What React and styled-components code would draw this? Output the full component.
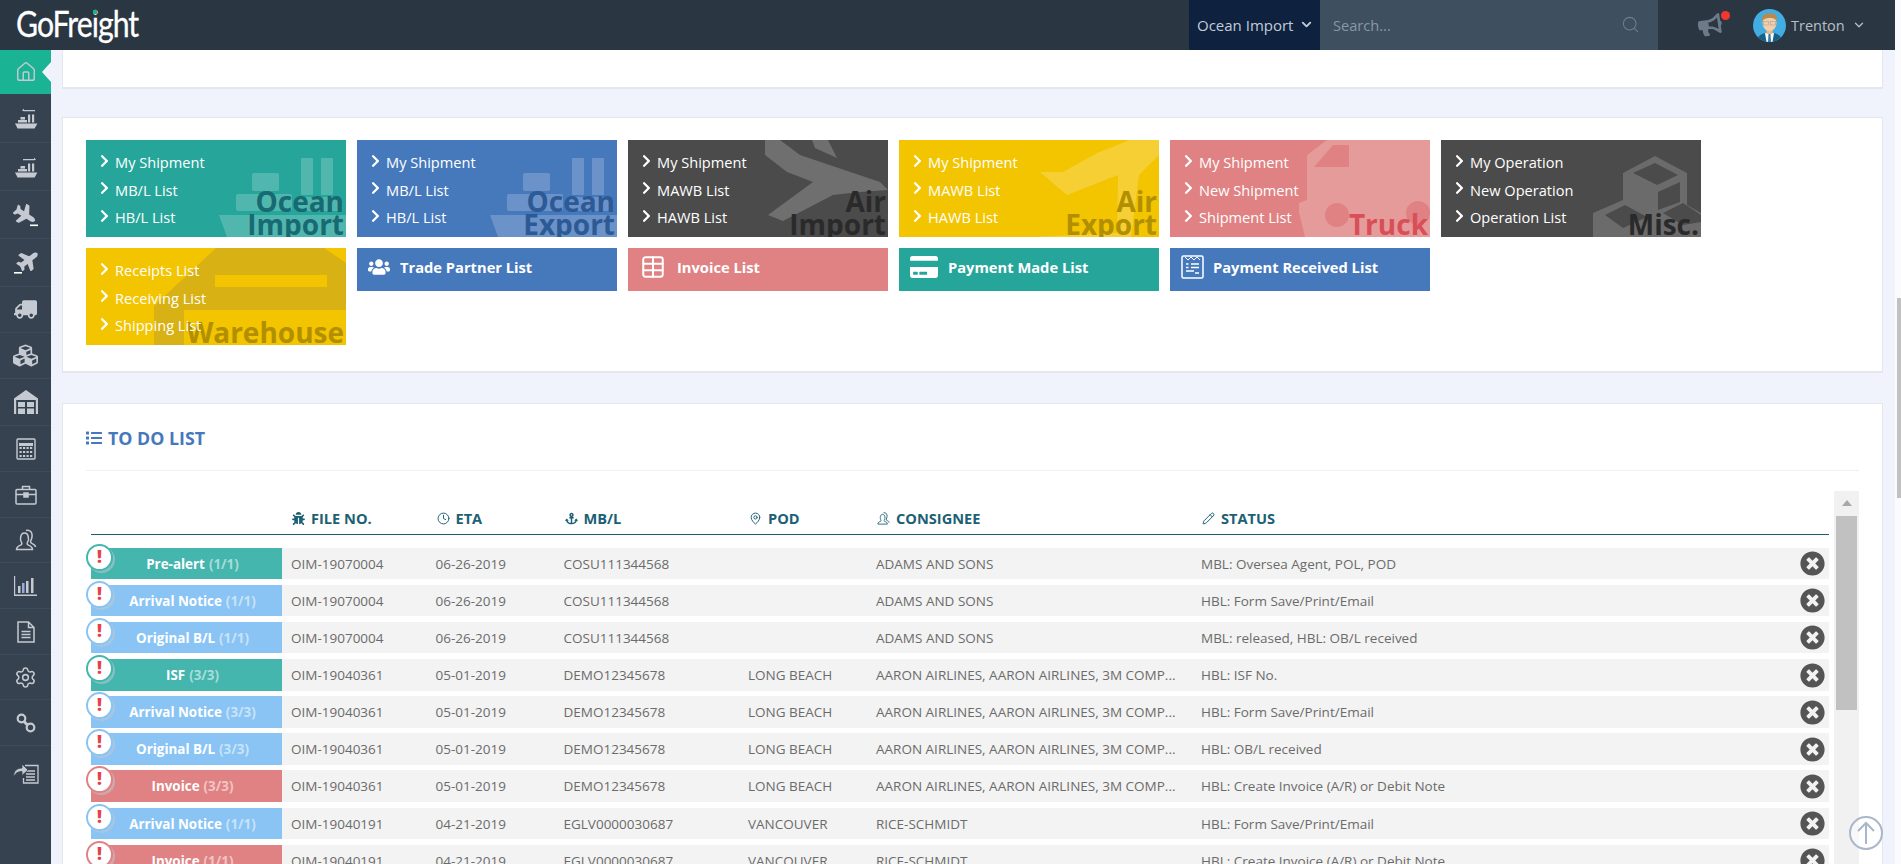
import React from "react";
import styled, { createGlobalStyle } from "styled-components";
import { FaChevronRight, FaUsers, FaCreditCard, FaList, FaTimesCircle, FaBug, FaBullhorn, FaCubes, FaTruck, FaAnchor } from "react-icons/fa";
import { House, Search, ChevronDown, Clock, MapPin, Pencil, Settings, Table } from "lucide-react";

const Global = createGlobalStyle`
  html, body { margin: 0; padding: 0; height: 100%; overflow: hidden; background: #f0f3fb; }
  body { font-family: "Open Sans", "Liberation Sans", sans-serif; font-size: 13px; color: #666; }
  #root { height: 100%; }
  * { box-sizing: border-box; }
`;

const Page = styled.div`
  display: flex;
  width: 100%;
  height: 100vh;
  overflow: hidden;
`;
const Shell = styled.div`
  flex: 1;
  min-width: 0;
  display: flex;
  flex-direction: column;
`;
const PageScroll = styled.div`
  width: 6px;
  flex: none;
  background: #fbfbfd;
  padding-top: 298px;
  padding-left: 2px;
`;
const PageThumb = styled.div`
  height: 200px;
  background: #c1c1c1;
`;
const Header = styled.header`
  height: 50px;
  flex: none;
  background: #2b3643;
  display: flex;
  align-items: stretch;
`;
const Logo = styled.div`
  position: relative;
  width: 1189px;
  padding-left: 16px;
`;
const LogoWord = styled.div`
  font-family: "Lato", sans-serif;
  font-size: 36px;
  line-height: 47px;
  color: #fff;
  letter-spacing: -1.2px;
  transform: scaleX(0.84);
  transform-origin: left center;
  -webkit-text-stroke: 0.3px #fff;
`;
const LogoDot = styled.span`
  position: absolute;
  left: 93px;
  top: 10px;
  width: 4px;
  height: 4px;
  background: #1ab394;
`;
const ModeSelect = styled.div`
  width: 131px;
  background: #0e2240;
  color: #c3ccd6;
  font-size: 15px;
  display: flex;
  align-items: center;
  padding-left: 8px;
  padding-bottom: 1px;
  gap: 6px;
`;
const SearchBox = styled.div`
  width: 338px;
  background: #3e4f60;
  color: #8897a6;
  font-size: 14.6px;
  display: flex;
  align-items: center;
  justify-content: space-between;
  padding: 0 18px 1px 13px;
`;
const NoticeWrap = styled.div`
  position: relative;
  margin-left: 40px;
  width: 24px;
  display: flex;
  align-items: center;
  color: #6c7a8a;
`;
const NoticeDot = styled.span`
  position: absolute;
  top: 11px;
  right: -8px;
  width: 9px;
  height: 9px;
  border-radius: 50%;
  background: #f3372f;
`;
const UserBox = styled.div`
  display: flex;
  align-items: center;
  margin-left: 31px;
  color: #b6c0cb;
  font-size: 14.5px;
  gap: 5px;
`;
const Body = styled.div`
  flex: 1;
  min-height: 0;
  display: flex;
`;
const Sidebar = styled.nav`
  width: 51px;
  flex: none;
  background: #36424f;
  display: flex;
  flex-direction: column;
`;
const SideItem = styled.div`
  position: relative;
  height: ${(p) => p.$h}px;
  flex: none;
  display: flex;
  align-items: center;
  justify-content: center;
  color: #c5cad2;
  background: ${(p) => (p.$active ? "#1ab394" : "transparent")};
  border-bottom: ${(p) => (p.$active || p.$last ? "0" : "1px solid #3f4b59")};
`;
const Notch = styled.span`
  position: absolute;
  right: 0;
  top: 12px;
  width: 0;
  height: 0;
  border-top: 10.5px solid transparent;
  border-bottom: 10.5px solid transparent;
  border-right: 9px solid #f0f3fb;
`;
const Main = styled.main`
  flex: 1;
  min-width: 0;
  overflow: hidden;
  padding: 0 12px 0 11px;
`;
const Card = styled.section`
  background: #fff;
  border: 1px solid #e3e7ee;
  border-bottom-width: 2px;
`;
const TopCard = styled(Card)`
  height: 39px;
  border-top: 0;
`;
const TilesCard = styled(Card)`
  margin-top: 28px;
  height: 256px;
  padding: 22px 0 0 23px;
`;
const TileGrid = styled.div`
  display: grid;
  grid-template-columns: repeat(6, 260px);
  column-gap: 11px;
  row-gap: 11px;
  align-items: start;
`;
const Tile = styled.div`
  position: relative;
  height: 97px;
  overflow: hidden;
  background: ${(p) => p.$bg};
  color: #fff;
  padding-top: 8.5px;
  padding-left: 14px;
`;
const TileArt = styled.svg`
  position: absolute;
  left: 0;
  top: 0;
  width: 260px;
  height: 97px;
`;
const TileLinks = styled.ul`
  position: relative;
  margin: 0;
  padding: 0;
  list-style: none;
`;
const TileLink = styled.li`
  display: flex;
  align-items: center;
  height: 27.5px;
  font-size: 14.6px;
  gap: 6px;
  svg { width: 9px; height: 14px; margin-top: -3px; flex: none; }
`;
const TileTitle = styled.div`
  position: absolute;
  right: 2px;
  bottom: 1px;
  text-align: right;
  font-size: 28px;
  font-weight: 700;
  line-height: 23px;
  color: ${(p) => p.$c};
`;
const ListTile = styled.div`
  height: 43px;
  background: ${(p) => p.$bg};
  color: #fff;
  display: flex;
  align-items: center;
  padding-bottom: 5px;
  padding-left: ${(p) => p.$pad}px;
  gap: ${(p) => p.$gap}px;
  font-size: 14.7px;
  font-weight: 700;
`;
const TodoCard = styled(Card)`
  margin-top: 30px;
  padding: 0 23px;
  height: 600px;
`;
const TodoTitle = styled.h2`
  margin: 0;
  height: 67px;
  border-bottom: 1px solid #eef0f3;
  display: flex;
  align-items: center;
  gap: 6px;
  font-size: 17.8px;
  font-weight: 700;
  color: #4678bc;
  padding-top: 2px;
`;
const TodoBody = styled.div`
  display: flex;
  margin-top: 20px;
  gap: 5px;
  padding-left: 5px;
`;
const TableArea = styled.div`
  flex: 1;
  min-width: 0;
`;
const HeadRow = styled.div`
  display: grid;
  grid-template-columns: 191px 144.5px 128px 184.5px 128px 325px 1fr;
  height: 44px;
  border-bottom: 1.5px solid #1d5b70;
  margin-bottom: 13px;
  align-items: end;
  padding-bottom: 6px;
`;
const HeadCell = styled.div`
  display: flex;
  align-items: center;
  gap: 6px;
  padding-left: 10px;
  font-size: 14.6px;
  font-weight: 700;
  color: #1c6075;
  svg { width: 13px; height: 13px; flex: none; }
`;
const Row = styled.div`
  position: relative;
  display: grid;
  grid-template-columns: 191px 144.5px 128px 184.5px 128px 325px 1fr 29.5px;
  height: ${(p) => p.$h}px;
  margin-bottom: ${(p) => p.$mb}px;
  background: #f3f3f3;
  align-items: center;
`;
const Label = styled.div`
  align-self: stretch;
  background: ${(p) => p.$bg};
  color: #fff;
  font-weight: 700;
  font-size: 13.4px;
  display: flex;
  align-items: center;
  justify-content: center;
  padding-left: 12px;
  white-space: nowrap;
`;
const Count = styled.span`
  color: rgba(255, 255, 255, 0.55);
  margin-left: 4px;
`;
const Alert = styled.span`
  position: absolute;
  left: -5px;
  top: -4px;
  width: 27px;
  height: 27px;
  border-radius: 50%;
  background: #fff;
  border: 2px solid ${(p) => p.$c};
  box-shadow: 2px 2px 0 rgba(190, 200, 210, 0.55);
  color: #e7404a;
  font-weight: 800;
  font-size: 17px;
  line-height: 21px;
  text-align: center;
`;
const Cell = styled.div`
  padding-left: 9px;
  font-size: 13.5px;
  color: #6b6b6b;
  white-space: nowrap;
  overflow: hidden;
`;
const Dismiss = styled.div`
  color: #555;
  display: flex;
  align-items: center;
  svg { width: 25px; height: 25px; }
`;
const InnerScroll = styled.div`
  width: 25px;
  flex: none;
  background: #f1f1f1;
  height: 400px;
  padding: 9px 2px 0;
`;
const ScrollArrow = styled.div`
  width: 0;
  height: 0;
  margin: 0 auto 10px;
  border-left: 5.5px solid transparent;
  border-right: 5.5px solid transparent;
  border-bottom: 6px solid #a8a8a8;
`;
const ScrollThumb = styled.div`
  height: 194px;
  background: #c1c1c1;
`;
const ToTop = styled.div`
  position: fixed;
  left: 1849px;
  top: 816px;
  width: 34px;
  height: 34px;
  border-radius: 50%;
  border: 2px solid #a9b7c9;
  background: rgba(255, 255, 255, 0.5);
  color: #a9b7c9;
  display: flex;
  align-items: center;
  justify-content: center;
`;

const Ship = ({ dir }) => (
  <svg width="24" height="24" viewBox="0 0 24 24" fill="currentColor">
    {dir === "in" ? (
      <path d="M10 4h11v1.300H10zM10 2.400 8 4.700 10 5.300z" />
    ) : (
      <path d="M9 4h11v1.300H9zM20 2.400l2 2.300-2 .6z" />
    )}
    <rect x="14" y="8.500" width="2.200" height="8" />
    <rect x="18" y="8.500" width="2.200" height="8" />
    <rect x="6.500" y="11" width="4.500" height="2.600" />
    <rect x="4" y="14" width="9" height="2.500" />
    <path d="M1 17.500h22.400l-2.800 5H3.600z" />
  </svg>
);
const PLANE = "M480 192H365.71L260.61 8.06A16.014 16.014 0 0 0 246.71 0h-65.5c-10.63 0-18.3 10.17-15.38 20.39L214.86 192H112l-43.2-57.6c-3.02-4.03-7.77-6.4-12.8-6.4H16.01C5.6 128-2.04 137.78.49 147.88L32 256 .49 364.12C-2.04 374.22 5.6 384 16.01 384H56c5.04 0 9.78-2.37 12.8-6.4L112 320h102.86l-49.03 171.6c-2.92 10.22 4.75 20.4 15.38 20.4h65.5c5.74 0 11.04-3.08 13.89-8.06L365.71 320H480c35.35 0 96-28.65 96-64s-60.65-64-96-64z";
const PlaneIn = () => (
  <svg width="26" height="26" viewBox="0 0 26 26" fill="currentColor">
    <g transform="translate(1 2) rotate(32 10 10) scale(0.04)"><path d={PLANE} /></g>
    <rect x="17" y="22.500" width="8" height="1.600" fill="#fff" />
  </svg>
);
const PlaneOut = () => (
  <svg width="26" height="26" viewBox="0 0 26 26" fill="currentColor">
    <g transform="translate(4 1) rotate(-38 10 10) scale(0.04)"><path d={PLANE} /></g>
    <rect x="1" y="22" width="8" height="1.600" fill="#fff" />
  </svg>
);
const Warehouse = () => (
  <svg width="26" height="24" viewBox="0 0 26 24" fill="currentColor">
    <path d="M13 0 25 8.500V24h-2.200V10H3.200v14H1V8.500z" />
    <rect x="5" y="12" width="7" height="5" /><rect x="14" y="12" width="7" height="5" />
    <rect x="5" y="18.500" width="7" height="5.500" /><rect x="14" y="18.500" width="7" height="5.500" />
  </svg>
);
const Calc = () => (
  <svg width="20" height="22" viewBox="0 0 20 22" fill="none" stroke="currentColor">
    <rect x="1" y="1" width="18" height="20" rx="1" strokeWidth="1.400" />
    <path d="M3 6.500h14" strokeWidth="3" />
    <path d="M3.500 10h13M3.500 14h13M3.500 18h13" strokeWidth="2" strokeDasharray="2.200 1.300" />
  </svg>
);
const Briefcase = () => (
  <svg width="22" height="20" viewBox="0 0 22 20" fill="none" stroke="currentColor" strokeWidth="1.500">
    <rect x="1" y="4.500" width="20" height="14.500" rx="1" />
    <path d="M7.500 4.500V1.500h7v3M1 9.500h20" />
    <rect x="9" y="8" width="4" height="4" fill="currentColor" />
  </svg>
);
const People = ({ size = 22 }) => (
  <svg width={size} height={size} viewBox="0 0 22 22" fill="none" stroke="currentColor" strokeWidth="1.500">
    <path d="M1.500 20.500c0-3 2-3.600 4.500-4.600 1-.5 1-2 .3-3C5 11 5 4 9.500 4c4.500 0 4.500 7 3.200 8.900-.7 1-.7 2.500.3 3 2.500 1 4.500 1.600 4.500 4.600z" />
    <path d="M11 1.400c4-1 6.600 2 6 6.500-.2 1.800-.8 3-1.300 4-.4 1 0 2 1 2.400 2 .8 3.800 1.500 3.800 3.700" />
  </svg>
);
const Chart = () => (
  <svg width="23" height="20" viewBox="0 0 23 20" fill="currentColor">
    <path d="M0 0h1.200v18.600H23V20H0z" />
    <rect x="4" y="10" width="2.500" height="7" /><rect x="8" y="7" width="2.500" height="10" fill="#9aa7e0" />
    <rect x="12" y="5" width="2.500" height="12" /><rect x="17" y="2" width="2.500" height="15" />
  </svg>
);
const Doc = () => (
  <svg width="18" height="22" viewBox="0 0 18 22" fill="none" stroke="currentColor" strokeWidth="1.500">
    <path d="M1 1h10.500L17 6.500V21H1zM11.500 1v5.500H17" />
    <path d="M4.500 10.500h9M4.500 13.500h9M4.500 16.500h9" />
  </svg>
);
const Chain = () => (
  <svg width="20" height="20" viewBox="0 0 20 20" fill="none" stroke="currentColor" strokeWidth="2.200">
    <circle cx="5.500" cy="5.500" r="3.800" />
    <circle cx="14.500" cy="14.500" r="3.800" />
    <path d="M7.500 8 12 12.500" strokeWidth="3" />
  </svg>
);
const Share = () => (
  <svg width="26" height="24" viewBox="0 0 26 24" fill="none" stroke="currentColor" strokeWidth="1.300">
    <path d="M12 5.500h7l6 0V23H10.500v-5" />
    <path d="M13 11h9M13 14h9M13 17h9M13 20h9" strokeWidth="1.500" />
    <path d="M0.500 17c0-6 3.500-9 8.500-9V4l6 6-6 5.500V11.500c-4 0-6.500 1.500-8.500 5.500z" fill="currentColor" stroke="#36424f" strokeWidth="0.800" />
  </svg>
);
const Receipt = () => (
  <svg width="23" height="24" viewBox="0 0 23 24" fill="none" stroke="#fff" strokeWidth="1.500">
    <rect x="1" y="1" width="21" height="22" rx="1.500" />
    <path d="m4 2 3 3 3-3 3 3 3-3 3 3" strokeWidth="1" />
    <path d="M5 9h2.500M10 9h8M5 12.500h2.500M10 12.500h8M5 16h8M14 18h4" />
  </svg>
);
const Avatar = () => (
  <svg width="33" height="33" viewBox="0 0 33 33">
    <defs><clipPath id="av"><circle cx="16.500" cy="16.500" r="16.500" /></clipPath></defs>
    <g clipPath="url(#av)">
      <rect width="33" height="33" fill="#41ade2" />
      <path d="M4 33c0-6 4-8 8-9h9c4 1 8 3 8 9z" fill="#1c5f86" />
      <path d="M12 24h9l-1.500 9h-6z" fill="#fff" />
      <path d="M15.500 25h2l.5 8h-3z" fill="#2a7fb0" />
      <rect x="13.500" y="19" width="6" height="6" fill="#e6b98e" />
      <ellipse cx="16.500" cy="14" rx="7" ry="8" fill="#f2cfa8" />
      <path d="M9 13c-1-6 3-9 8-9s8 3 7 9c-1-3-3-4-7-4s-7 1-8 4z" fill="#b88a4f" />
      <rect x="10.500" y="12.500" width="5" height="3.500" fill="none" stroke="#a9a9a9" strokeWidth="0.700" />
      <rect x="17.500" y="12.500" width="5" height="3.500" fill="none" stroke="#a9a9a9" strokeWidth="0.700" />
    </g>
  </svg>
);

const white = "rgba(255,255,255,.2)";
const OceanArt = () => (
  <TileArt viewBox="0 0 260 97" fill={white}>
    <rect x="215" y="18" width="12" height="37" rx="1" />
    <rect x="235" y="18" width="12" height="37" rx="1" />
    <rect x="166" y="33" width="27" height="18" rx="2" />
    <rect x="150" y="54" width="56" height="17" rx="2" />
    <rect x="212" y="57" width="40" height="14" rx="1" />
    <path d="M133 75H260V97H141z" />
  </TileArt>
);
const AirInArt = () => (
  <TileArt viewBox="0 0 260 97" fill={white}>
    <path d="M137 0V15L159 32 185 42 140 75 155 81 205 55 232 52 260 50 252 42 172 15 152 0z" />
    <path d="M184 0 187 8 209 18 200 0z" />
  </TileArt>
);
const AirOutArt = () => (
  <TileArt viewBox="0 0 260 97" fill={white}>
    <path d="M169 0 198 13 231 0H260V15L240 35 232 97H218L219 35 168 55 141 32 164 32 198 13z" />
    <path d="M129 97 218 93V97z" />
  </TileArt>
);
const TruckArt = () => (
  <TileArt viewBox="0 0 260 97">
    <path d="M157 0H260V97H135L129 72V63L137 60V15z" fill={white} />
    <path d="M144 27 163 5H179V27z" fill="#e08283" />
    <circle cx="167" cy="75" r="12" fill="#e08283" />
    <circle cx="248" cy="73" r="12" fill="#e08283" />
  </TileArt>
);
const MiscArt = () => (
  <TileArt viewBox="0 0 260 97">
    <path d="M214 16 246 33V65L260 73V97H152V73L182 60V33z" fill="#6b6b6b" />
    <path d="M214 23 237 35 216 45 192 33z" fill="#4b4b4b" />
    <path d="M217 52 239 42V62L217 70z" fill="#4b4b4b" />
    <path d="M164 75 184 65 206 77 182 88z" fill="#4b4b4b" />
    <path d="M222 73 242 63 260 75V82L242 85z" fill="#4b4b4b" />
  </TileArt>
);
const HouseArt = () => (
  <TileArt viewBox="0 0 260 97">
    <path d="M130 0H238L260 15V62H98V97H68V58z" fill="#d8b114" />
    <rect x="129" y="27" width="112" height="12" fill="#f3c400" />
  </TileArt>
);

const tiles = [
  { bg: "#26a69a", art: <OceanArt />, links: ["My Shipment", "MB/L List", "HB/L List"], title: ["Ocean", "Import"], c: "#176a71" },
  { bg: "#4678bc", art: <OceanArt />, links: ["My Shipment", "MB/L List", "HB/L List"], title: ["Ocean", "Export"], c: "#2d5a95" },
  { bg: "#4b4b4b", art: <AirInArt />, links: ["My Shipment", "MAWB List", "HAWB List"], title: ["Air", "Import"], c: "#2a2a2a" },
  { bg: "#f3c400", art: <AirOutArt />, links: ["My Shipment", "MAWB List", "HAWB List"], title: ["Air", "Export"], c: "#b18f00" },
  { bg: "#e08283", art: <TruckArt />, links: ["My Shipment", "New Shipment", "Shipment List"], title: ["Truck"], c: "#d84f57" },
  { bg: "#4b4b4b", art: <MiscArt />, links: ["My Operation", "New Operation", "Operation List"], title: ["Misc."], c: "#2a2a2a" },
  { bg: "#f3c400", art: <HouseArt />, links: ["Receipts List", "Receiving List", "Shipping List"], title: ["Warehouse"], c: "#b18f00" },
];

const TEAL = "#44b6ae";
const BLUE = "#89c4f4";
const RED = "#e08283";
const sc = "AARON AIRLINES, AARON AIRLINES, 3M COMP...";
const rows = [
  ["Pre-alert", "(1/1)", TEAL, "OIM-19070004", "06-26-2019", "COSU111344568", "", "ADAMS AND SONS", "MBL: Oversea Agent, POL, POD", 31, 6],
  ["Arrival Notice", "(1/1)", BLUE, "OIM-19070004", "06-26-2019", "COSU111344568", "", "ADAMS AND SONS", "HBL: Form Save/Print/Email", 31, 6],
  ["Original B/L", "(1/1)", BLUE, "OIM-19070004", "06-26-2019", "COSU111344568", "", "ADAMS AND SONS", "MBL: released, HBL: OB/L received", 31, 6],
  ["ISF", "(3/3)", TEAL, "OIM-19040361", "05-01-2019", "DEMO12345678", "LONG BEACH", sc, "HBL: ISF No.", 32, 5],
  ["Arrival Notice", "(3/3)", BLUE, "OIM-19040361", "05-01-2019", "DEMO12345678", "LONG BEACH", sc, "HBL: Form Save/Print/Email", 32, 5],
  ["Original B/L", "(3/3)", BLUE, "OIM-19040361", "05-01-2019", "DEMO12345678", "LONG BEACH", sc, "HBL: OB/L received", 32, 5],
  ["Invoice", "(3/3)", RED, "OIM-19040361", "05-01-2019", "DEMO12345678", "LONG BEACH", sc, "HBL: Create Invoice (A/R) or Debit Note", 32, 6],
  ["Arrival Notice", "(1/1)", BLUE, "OIM-19040191", "04-21-2019", "EGLV0000030687", "VANCOUVER", "RICE-SCHMIDT", "HBL: Form Save/Print/Email", 31, 6],
  ["Invoice", "(1/1)", RED, "OIM-19040191", "04-21-2019", "EGLV0000030687", "VANCOUVER", "RICE-SCHMIDT", "HBL: Create Invoice (A/R) or Debit Note", 31, 6],
];

const side = [
  [44, <House size={22} strokeWidth={1.6} />],
  [49, <Ship dir="in" />],
  [48, <Ship dir="out" />],
  [48, <PlaneIn />],
  [48, <PlaneOut />],
  [46, <FaTruck size={23} style={{ transform: "scaleX(-1)" }} />],
  [46, <FaCubes size={25} />],
  [47, <Warehouse />],
  [46, <Calc />],
  [46, <Briefcase />],
  [45, <People />],
  [46, <Chart />],
  [46, <Doc />],
  [45, <Settings size={23} strokeWidth={1.6} />],
  [46, <Chain />],
  [52, <Share />],
];

export default function App() {
  return (
    <Page>
      <Global />
      <Shell>
        <Header>
          <Logo><LogoWord>GoFreight</LogoWord><LogoDot /></Logo>
          <ModeSelect>Ocean Import <ChevronDown size={15} strokeWidth={3} /></ModeSelect>
          <SearchBox>Search... <Search size={19} strokeWidth={1.3} color="#6d7e90" /></SearchBox>
          <NoticeWrap><FaBullhorn size={24} style={{ transform: "rotate(-8deg)" }} /><NoticeDot /></NoticeWrap>
          <UserBox><Avatar />Trenton<ChevronDown size={14} strokeWidth={2.2} style={{ marginLeft: 2 }} /></UserBox>
        </Header>
        <Body>
          <Sidebar>
            {side.map(([h, icon], i) => (
              <SideItem key={i} $h={h} $active={i === 0} $last={i === side.length - 1}>
                {icon}
                {i === 0 && <Notch />}
              </SideItem>
            ))}
          </Sidebar>
          <Main>
            <TopCard />
            <TilesCard>
              <TileGrid>
                {tiles.map((t, i) => (
                  <Tile key={i} $bg={t.bg}>
                    {t.art}
                    <TileTitle $c={t.c}>{t.title.map((l) => <div key={l}>{l}</div>)}</TileTitle>
                    <TileLinks>
                      {t.links.map((l) => <TileLink key={l}><FaChevronRight />{l}</TileLink>)}
                    </TileLinks>
                  </Tile>
                ))}
                <ListTile $bg="#4678bc" $pad={11} $gap={10}><FaUsers size={22} />Trade Partner List</ListTile>
                <ListTile $bg="#e08283" $pad={12} $gap={11}><Table size={26} strokeWidth={1.8} />Invoice List</ListTile>
                <ListTile $bg="#26a69a" $pad={11} $gap={10}><FaCreditCard size={28} />Payment Made List</ListTile>
                <ListTile $bg="#4678bc" $pad={11} $gap={9}><Receipt />Payment Received List</ListTile>
              </TileGrid>
            </TilesCard>
            <TodoCard>
              <TodoTitle><FaList size={16} />TO DO LIST</TodoTitle>
              <TodoBody>
                <TableArea>
                  <HeadRow>
                    <span />
                    <HeadCell><FaBug />FILE NO.</HeadCell>
                    <HeadCell><Clock strokeWidth={1.8} />ETA</HeadCell>
                    <HeadCell><FaAnchor />MB/L</HeadCell>
                    <HeadCell><MapPin strokeWidth={1.8} />POD</HeadCell>
                    <HeadCell><People size={14} />CONSIGNEE</HeadCell>
                    <HeadCell><Pencil strokeWidth={1.8} />STATUS</HeadCell>
                  </HeadRow>
                  {rows.map((r, i) => (
                    <Row key={i} $h={r[9]} $mb={r[10]}>
                      <Label $bg={r[2]}>{r[0]}<Count>{r[1]}</Count></Label>
                      <Cell>{r[3]}</Cell>
                      <Cell>{r[4]}</Cell>
                      <Cell>{r[5]}</Cell>
                      <Cell>{r[6]}</Cell>
                      <Cell>{r[7]}</Cell>
                      <Cell>{r[8]}</Cell>
                      <Dismiss><FaTimesCircle /></Dismiss>
                      <Alert $c={r[2]}>!</Alert>
                    </Row>
                  ))}
                </TableArea>
                <InnerScroll><ScrollArrow /><ScrollThumb /></InnerScroll>
              </TodoBody>
            </TodoCard>
          </Main>
        </Body>
      </Shell>
      <PageScroll><PageThumb /></PageScroll>
      <ToTop><svg width="20" height="24" viewBox="0 0 20 24" fill="none" stroke="currentColor" strokeWidth="2"><path d="M10 23V2M2 10l8-8 8 8" /></svg></ToTop>
    </Page>
  );
}
